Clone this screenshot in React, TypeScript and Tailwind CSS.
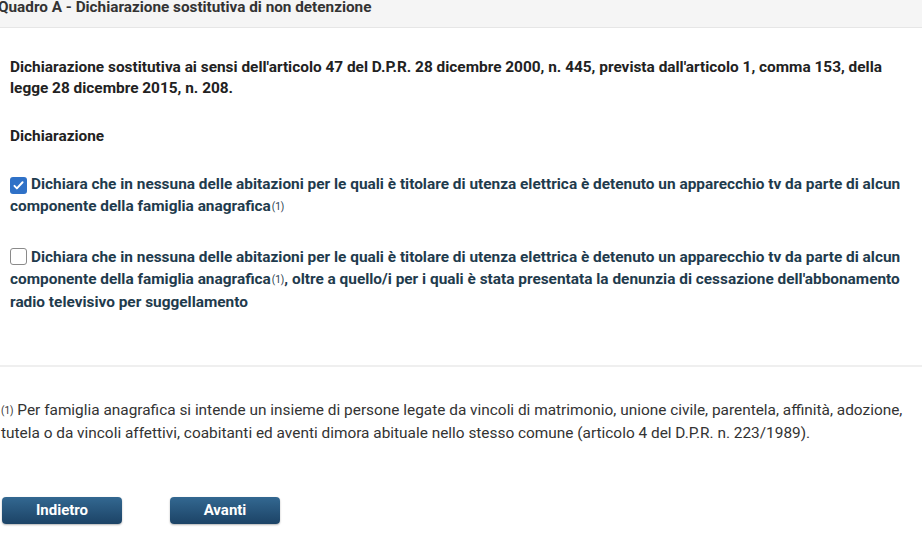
import { useState } from 'react';

const Sup = () => <span className="text-[10px] font-normal align-[1px] ml-[1px]">(1)</span>;

const Check = ({ on, toggle }: { on: boolean; toggle: () => void }) => (
  <span
    onClick={toggle}
    className={`inline-flex items-center justify-center w-[17px] h-[17px] mr-[4px] align-[-3px] rounded-[3px] ${
      on ? 'bg-[#2f71c7]' : 'bg-white border border-[#8a8a8a]'
    }`}
  >
    {on && (
      <svg viewBox="0 0 16 16" className="w-[13px] h-[13px]">
        <path d="M3 8.5l3 3 7-7.5" fill="none" stroke="white" strokeWidth="2.4" strokeLinecap="round" strokeLinejoin="round" />
      </svg>
    )}
  </span>
);

const App = () => {
  const [first, setFirst] = useState(true);
  const [second, setSecond] = useState(false);

  return (
    <div className="w-[922px] h-[552px] bg-white overflow-hidden font-['Roboto',sans-serif] text-[14px]">
      {/* intestazione del quadro */}
      <div className="h-[28px] bg-[#f5f5f5] border-b border-[#e6e6e6] flex items-start">
        <h2 className="-ml-[2px] -mt-[2px] text-[15.3px] font-bold text-[#333] leading-[18px] whitespace-nowrap">
          Quadro A - Dichiarazione sostitutiva di non detenzione
        </h2>
      </div>

      <div className="px-[10px] pt-[29px]">
        <p className="font-bold text-[15.4px] text-[#222] leading-[21px]">
          Dichiarazione sostitutiva ai sensi dell'articolo 47 del D.P.R. 28 dicembre 2000, n. 445, prevista dall'articolo 1, comma 153, della legge 28 dicembre 2015, n. 208.
        </p>

        <p className="mt-[27px] font-bold text-[15.4px] text-[#222] leading-[21px]">Dichiarazione</p>

        <label className="block mt-[26px] font-bold text-[15.4px] text-[#1f3b4d] leading-[22px] cursor-pointer">
          <Check on={first} toggle={() => setFirst(!first)} />
          Dichiara che in nessuna delle abitazioni per le quali è titolare di utenza elettrica è detenuto un apparecchio tv da parte di alcun componente della famiglia anagrafica<Sup />
        </label>

        <label className="block mt-[28px] font-bold text-[15.4px] text-[#1f3b4d] leading-[22px] cursor-pointer">
          <Check on={second} toggle={() => setSecond(!second)} />
          Dichiara che in nessuna delle abitazioni per le quali è titolare di utenza elettrica è detenuto un apparecchio tv da parte di alcun componente della famiglia anagrafica<Sup />, oltre a quello/i per i quali è stata presentata la denunzia di cessazione dell'abbonamento radio televisivo per suggellamento
        </label>
      </div>

      <div className="mt-[52px] border-t-2 border-[#efefef]" />

      <p className="mt-[32px] pl-[1px] pr-[10px] text-[15.4px] text-[#333] leading-[22px]">
        <span className="text-[10px] align-[1px]">(1)</span> Per famiglia anagrafica si intende un insieme di persone legate da vincoli di matrimonio, unione civile, parentela, affinità, adozione, tutela o da vincoli affettivi, coabitanti ed aventi dimora abituale nello stesso comune (articolo 4 del D.P.R. n. 223/1989).
      </p>

      <div className="mt-[53px] pl-[2px] flex gap-[48px]">
        <button className="w-[120px] h-[27px] rounded-[4px] bg-gradient-to-b from-[#336891] to-[#1c4366] text-white font-bold text-[15px] shadow-[0_1px_2px_rgba(0,0,0,0.3)]">
          Indietro
        </button>
        <button className="w-[110px] h-[27px] rounded-[4px] bg-gradient-to-b from-[#336891] to-[#1c4366] text-white font-bold text-[15px] shadow-[0_1px_2px_rgba(0,0,0,0.3)]">
          Avanti
        </button>
      </div>
    </div>
  );
};

export default App;
